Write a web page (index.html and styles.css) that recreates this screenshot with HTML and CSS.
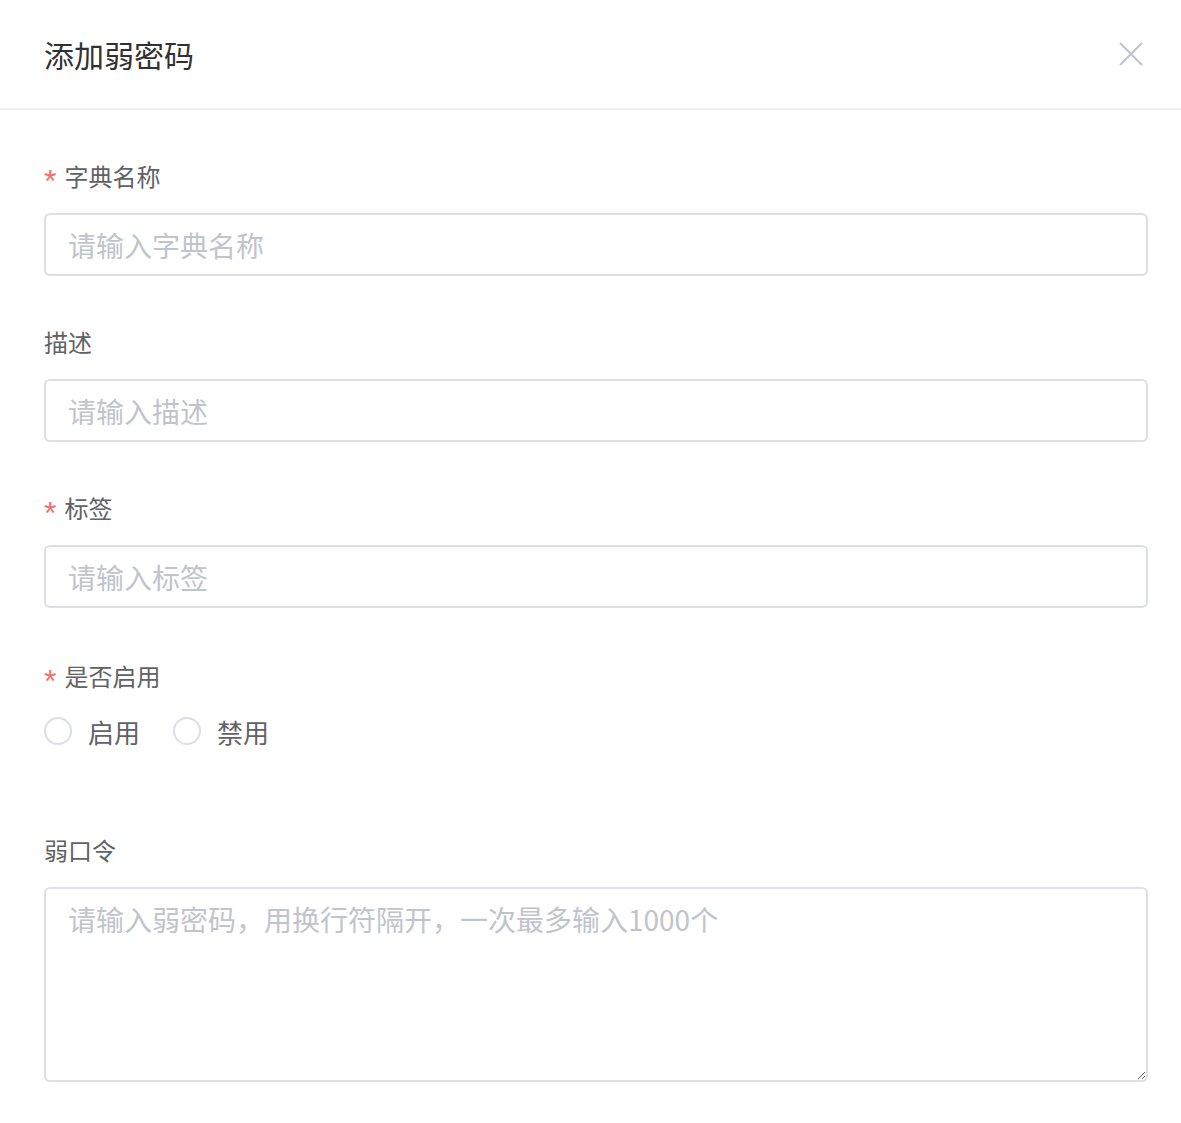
FILE: index.html
```html
<!DOCTYPE html>
<html lang="zh-CN">

<head>
    <meta charset="UTF-8">
    <meta name="viewport" content="width=device-width, initial-scale=1.0">
    <link rel="stylesheet" href="styles.css">
    <title>添加弱密码</title>
</head>

<body>

    <div class="dialogo">

        <div class="cabecalho">
            <span class="titulo">添加弱密码</span>
            <button class="fechar" type="button" aria-label="关闭">
                <svg width="24" height="24" viewBox="0 0 24 24">
                    <path d="M1 1 L23 23 M23 1 L1 23" stroke="#c0c4cc" stroke-width="2" fill="none" />
                </svg>
            </button>
        </div>

        <form class="formulario">

            <div class="campo">
                <label class="rotulo obrigatorio">字典名称</label>
                <input class="entrada" type="text" placeholder="请输入字典名称">
            </div>

            <div class="campo">
                <label class="rotulo">描述</label>
                <input class="entrada" type="text" placeholder="请输入描述">
            </div>

            <div class="campo">
                <label class="rotulo obrigatorio">标签</label>
                <input class="entrada" type="text" placeholder="请输入标签">
            </div>

            <div class="campo campo-radio">
                <label class="rotulo obrigatorio">是否启用</label>
                <div class="grupo-radio">
                    <label class="radio"><span class="circulo"></span>启用</label>
                    <label class="radio"><span class="circulo"></span>禁用</label>
                </div>
            </div>

            <div class="campo">
                <label class="rotulo">弱口令</label>
                <textarea class="area" placeholder="请输入弱密码，用换行符隔开，一次最多输入1000个"></textarea>
            </div>

        </form>

    </div>

</body>
</html>
```

FILE: styles.css
```css
body {
    margin: 0;
    background: #fff;
    font-family: "Noto Sans CJK SC", "Noto Sans", sans-serif;
}

.dialogo {
    width: 1181px;
    background: #fff;
}

.cabecalho {
    height: 110px;
    border-bottom: 2px solid #f0f0f0;
    display: flex;
    align-items: center;
    justify-content: space-between;
    padding: 0 38px 0 44px;
    box-sizing: border-box;
}

.titulo {
    font-size: 30px;
    color: #303133;
    line-height: 40px;
}

.fechar {
    border: none;
    background: none;
    padding: 0;
    width: 24px;
    height: 24px;
    display: flex;
    cursor: pointer;
}

.formulario {
    padding: 50px 33px 0 44px;
}

.campo {
    display: flex;
    flex-direction: column;
    margin-bottom: 50px;
}

.rotulo {
    display: flex;
    align-items: flex-start;
    height: 32px;
    font-size: 24px;
    line-height: 32px;
    color: #606266;
    margin-bottom: 21px;
}

.obrigatorio::before {
    content: "*";
    display: block;
    height: 20px;
    font-family: "Liberation Sans", sans-serif;
    font-size: 32px;
    line-height: 1;
    margin-top: 5px;
    color: #f56c6c;
    margin-right: 8px;
}

.entrada {
    height: 63px;
    box-sizing: border-box;
    border: 2px solid #dcdfe6;
    border-radius: 6px;
    padding: 0 22px;
    font-size: 28px;
    font-family: inherit;
    color: #606266;
    outline: none;
}

.entrada::placeholder,
.area::placeholder {
    color: #c0c4cc;
}

.campo-radio {
    padding-top: 2px;
    margin-bottom: 87px;
}

.campo-radio .rotulo {
    margin-bottom: 23px;
}

.grupo-radio {
    display: flex;
    align-items: center;
    height: 32px;
}

.radio {
    display: flex;
    align-items: center;
    font-size: 26px;
    color: #606266;
    margin-right: 33px;
}

.circulo {
    width: 28px;
    height: 28px;
    box-sizing: border-box;
    border: 2px solid #dcdfe6;
    border-radius: 50%;
    margin-right: 16px;
}

.area {
    height: 195px;
    box-sizing: border-box;
    border: 2px solid #dcdfe6;
    border-radius: 6px;
    padding: 9px 22px;
    font-size: 28px;
    line-height: 42px;
    font-family: inherit;
    color: #606266;
    outline: none;
    resize: vertical;
}
```
